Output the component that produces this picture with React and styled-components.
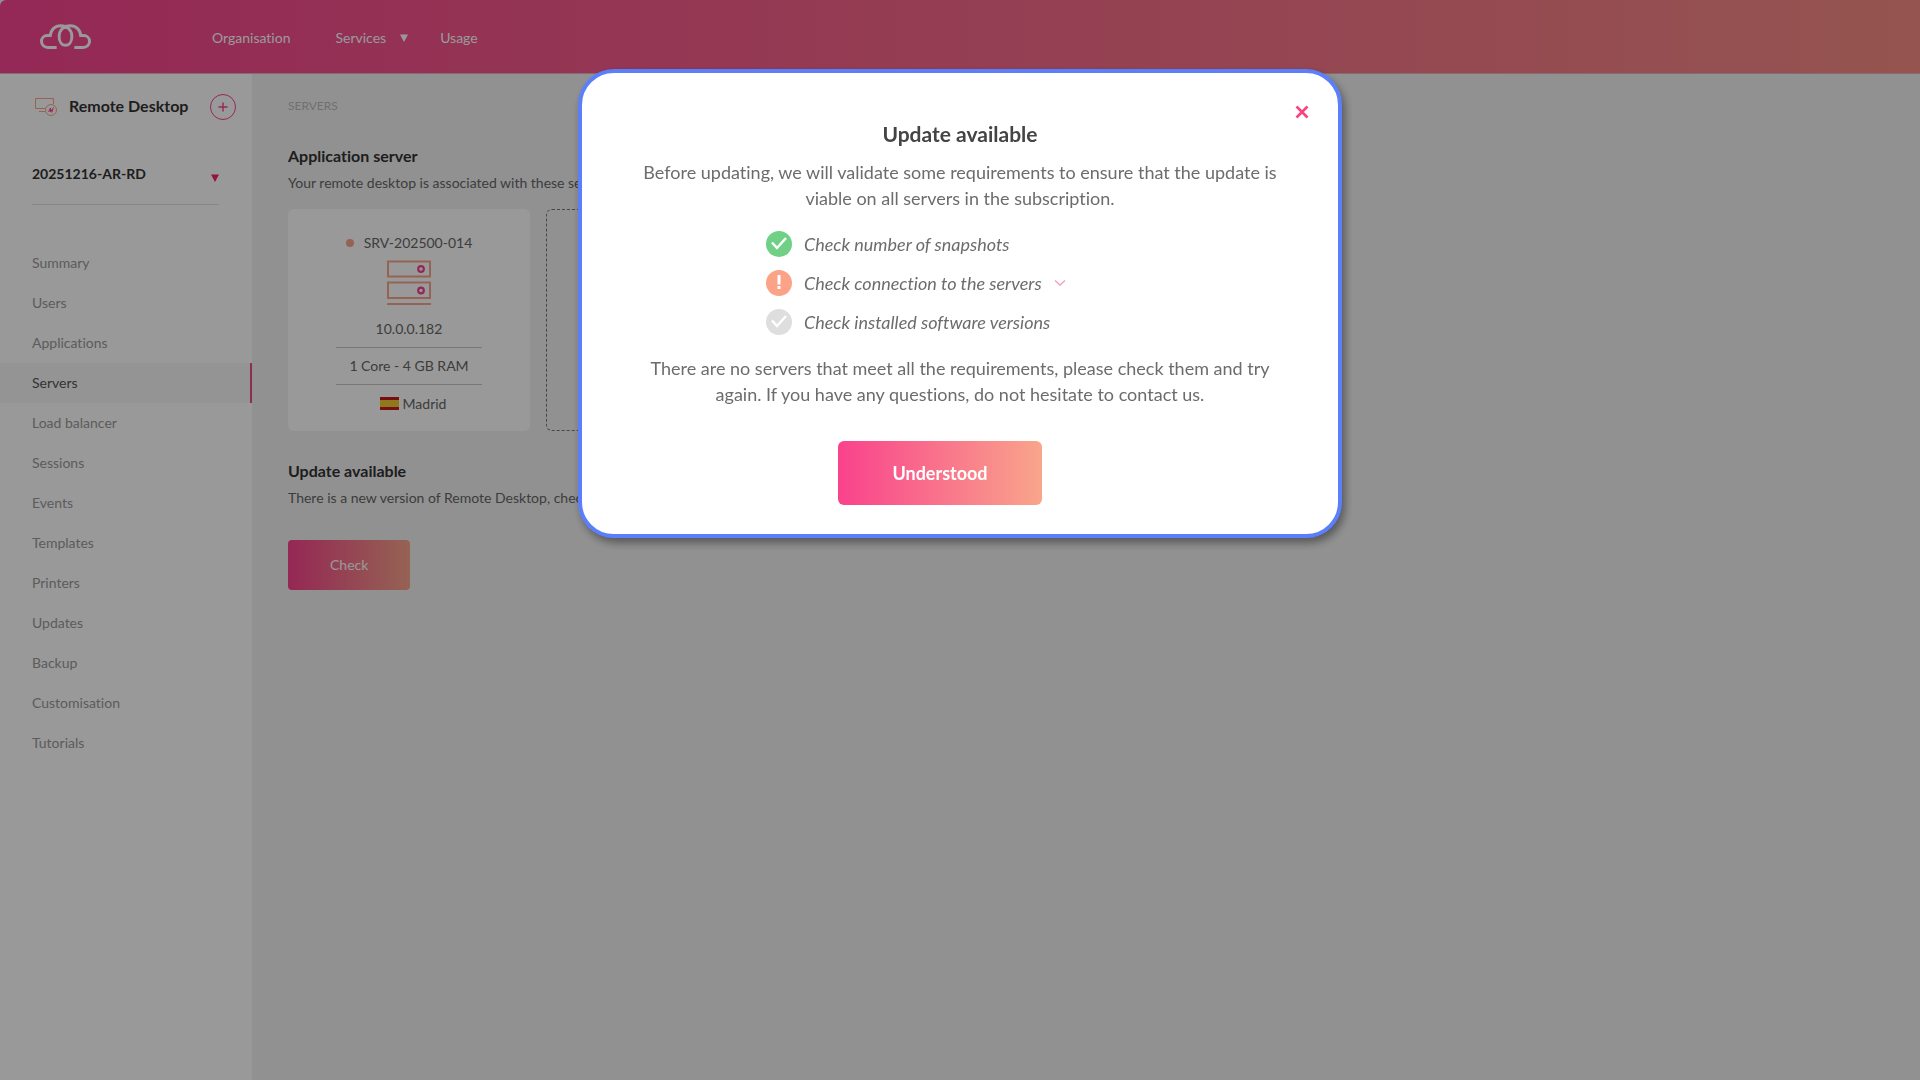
import React, { useState } from 'react'
import styled, { createGlobalStyle } from 'styled-components'

const GlobalStyle = createGlobalStyle`
* {
  box-sizing: border-box;
}
body {
  margin: 0;
  background-color: #f2f2f2;
  font-family: Lato, 'Liberation Sans', sans-serif;
  font-size: 14px;
  line-height: 20px;
  font-variant-ligatures: none;
  color: #666;
}
button, select {
  font-family: inherit;
}
`
const Page = styled.div`
min-height: 100vh;
display: flex;
flex-direction: column;
`
const TopBar = styled.header`
display: flex;
align-items: center;
height: 74px;
padding-left: 40px;
border-bottom: 1px solid #dcb4c0;
border-top-left-radius: 6px;
background-image: linear-gradient(90deg, #f7438f 0%, #f88d86 100%);
`
const LogoLink = styled.a`
display: flex;
width: 172px;
`
const TopNav = styled.nav`
display: flex;
align-items: center;
gap: 32px;
padding-top: 2px;
`
const TopLink = styled.a`
display: flex;
align-items: center;
gap: 14px;
padding-left: ${p => p.$menu ? '13px' : '0'};
color: #fff;
text-decoration: none;
`
const Body = styled.div`
flex: 1;
display: flex;
`
const Sidebar = styled.aside`
width: 252px;
flex-shrink: 0;
background-color: #fff;
`
const Product = styled.div`
display: flex;
align-items: center;
height: 65px;
padding: 0 16px 0 35px;
`
const ProductName = styled.h1`
margin: 0 auto 0 12px;
padding-bottom: 2px;
font-size: 16px;
line-height: 20px;
font-weight: 700;
color: #333;
`
const AddButton = styled.button`
display: flex;
align-items: center;
justify-content: center;
width: 26px;
height: 26px;
padding: 0;
border: 1px solid #f7438f;
border-radius: 50%;
background: none;
`
const Subscription = styled.label`
display: flex;
align-items: center;
height: 66px;
margin: 0 33px 38px 32px;
padding-top: 4px;
border-bottom: 1px solid #e2e2e2;
`
const SubscriptionSelect = styled.select`
flex: 1;
appearance: none;
padding: 0;
border: 0;
background: none;
font-size: 14px;
line-height: 20px;
font-weight: 700;
color: #333;
`
const SelectArrow = styled.span`
display: flex;
padding-top: 8px;
`
const MenuItem = styled.a`
display: flex;
align-items: center;
height: 40px;
padding-left: 32px;
border-right: ${p => p.$active ? '2px solid #e5508a' : '0'};
background-color: ${p => p.$active ? '#f7f7f7' : 'transparent'};
color: ${p => p.$active ? '#555' : '#999'};
text-decoration: none;
`
const Content = styled.main`
flex: 1;
padding: 22px 36px;
`
const Crumb = styled.div`
margin-bottom: 30px;
font-size: 12px;
line-height: 20px;
color: #bbb;
`
const Title = styled.h2`
margin: 0 0 7px;
font-size: 16px;
line-height: 20px;
font-weight: 700;
color: #333;
`
const Text = styled.p`
margin: 0;
line-height: 20px;
`
const Cards = styled.div`
display: flex;
gap: 16px;
margin: 16px 0 30px;
`
const Card = styled.article`
width: 242px;
height: 222px;
padding: 24px 48px 0;
border-radius: 6px;
background-color: #fff;
display: flex;
flex-direction: column;
align-items: center;
`
const EmptyCard = styled(Card)`
border: 1px dashed #777;
background: none;
`
const ServerName = styled.div`
display: flex;
align-items: center;
gap: 10px;
margin-bottom: 7px;
`
const Dot = styled.span`
width: 8px;
height: 8px;
border-radius: 50%;
background-color: #f9a58b;
`
const Details = styled.div`
width: 100%;
margin-top: 5px;
`
const Detail = styled.div`
display: flex;
align-items: center;
justify-content: center;
gap: 4px;
height: 37px;
padding-left: ${p => p.$last ? '8px' : '0'};
border-bottom: ${p => p.$last ? '0' : '1px solid #c8c8c8'};
`
const PrimaryButton = styled.button`
padding: ${p => p.$big ? '20px 54px' : '15px 42px'};
border: 0;
border-radius: ${p => p.$big ? '6px' : '4px'};
background-image: linear-gradient(90deg, #f9428c 0%, #f9a58b 100%);
color: #fff;
font-size: ${p => p.$big ? '18px' : '14px'};
font-weight: ${p => p.$big ? '700' : '400'};
line-height: ${p => p.$big ? '24px' : '20px'};
`
const CheckNow = styled.div`
margin-top: 32px;
`
const Overlay = styled.div`
position: fixed;
inset: 0;
display: flex;
align-items: flex-start;
justify-content: center;
padding-top: 69px;
background-color: rgba(0, 0, 0, 0.4);
`
const Dialog = styled.section`
position: relative;
width: 764px;
max-width: 100%;
padding: 48px 56px 29px;
border: 4px solid #5b7ffb;
border-radius: 36px;
background-color: #fff;
box-shadow: 3px 5px 8px rgba(0, 0, 0, 0.4);
text-align: center;
`
const CloseButton = styled.button`
position: absolute;
top: 28px;
right: 25px;
display: flex;
padding: 4px;
border: 0;
background: none;
`
const DialogTitle = styled.h2`
margin: 0 0 12px;
font-size: 21px;
line-height: 26px;
font-weight: 700;
color: #444;
`
const DialogText = styled.p`
margin: 0;
font-size: 18px;
line-height: 26px;
color: #6c6c6c;
`
const Checks = styled.ul`
display: flex;
flex-direction: column;
gap: 13px;
margin: 20px 0;
padding: 0 0 0 128px;
list-style: none;
`
const CheckItem = styled.li`
display: flex;
align-items: center;
gap: 12px;
font-size: 18px;
line-height: 26px;
font-style: italic;
color: #6c6c6c;
`
const ExpandButton = styled.button`
display: flex;
padding: 0;
border: 0;
background: none;
`
const DialogFooter = styled.div`
display: flex;
justify-content: center;
margin-top: 34px;
padding-right: 40px;
`

const menu = ['Summary', 'Users', 'Applications', 'Servers', 'Load balancer', 'Sessions', 'Events', 'Templates', 'Printers', 'Updates', 'Backup', 'Customisation', 'Tutorials']

const Triangle = ({ color }) => (
  <svg width="8" height="8" viewBox="0 0 8 8" aria-hidden="true">
    <path d="M0 0.500h8L4 8z" fill={color} />
  </svg>
)

const Logo = () => (
  <svg width="51" height="26" viewBox="0 0 52 26" fill="none" stroke="#fff" strokeWidth="3" aria-hidden="true">
    <path d="M17 23.700H8C4.500 23.700 1.500 21 1.500 17.500C1.500 14 4 11.500 7.500 11.500C9 11.500 10 11.500 10.500 11.500C11 5.500 15.500 1.500 21 1.500C28 1.500 32.500 6 32.500 12.500C32.500 17.500 30 21.500 26 21.500C22 21.500 19.500 17.500 19.500 12.500C19.500 6 24 1.500 31 1.500C36.500 1.500 41 5.500 41.500 11.500H44.500C48 11.500 50.500 14 50.500 17.500C50.500 21 47.500 23.700 44 23.700H35" />
  </svg>
)

const DesktopIcon = () => (
  <svg width="22" height="18" viewBox="0 0 22 18" fill="none" stroke="#f9a58b" aria-hidden="true">
    <path d="M10 10.500H0.500V0.500H18.500V6M4 13.500H10" />
    <circle cx="16" cy="12" r="5.500" />
    <path d="M13.500 14L15.500 10V14L18.500 9.500M16.500 14.500L18 11.500" stroke="#f7438f" />
  </svg>
)

const ServerIcon = () => (
  <svg width="46" height="46" viewBox="0 0 46 46" fill="none" stroke="#f9a58b" strokeWidth="2" aria-hidden="true">
    <path d="M2 1.500H44V16.500H2zM2 22.500H44V38H2zM1 44H45" />
    <g stroke="#f7438f" strokeWidth="2.200">
      <circle cx="35" cy="9" r="2.800" />
      <circle cx="35" cy="30.500" r="2.800" />
    </g>
  </svg>
)

const Flag = () => (
  <svg width="19" height="13" viewBox="0 0 19 13" aria-hidden="true">
    <path d="M0 0h19v13H0z" fill="#c91a1a" />
    <path d="M0 3h19v7H0z" fill="#f0c832" />
  </svg>
)

const StatusIcon = ({ status }) => {
  const fill = { ok: '#6fd086', error: '#fba287', pending: '#dedede' }[status]
  return (
    <svg width="26" height="26" viewBox="0 0 26 26" fill="none" stroke="#fff" strokeWidth="2.500" aria-hidden="true">
      <circle cx="13" cy="13" r="13" fill={fill} stroke="none" />
      {status === 'error'
        ? <path d="M13 5V14.500M13 16V19" strokeWidth="3" />
        : <path d="M6 11.500L11 17L20 7" />}
    </svg>
  )
}

export default function App() {
  const [open, setOpen] = useState(true)

  return (
    <Page>
      <GlobalStyle />
      <TopBar>
        <LogoLink href="#" aria-label="Home"><Logo /></LogoLink>
        <TopNav>
          <TopLink href="#">Organisation</TopLink>
          <TopLink href="#" $menu>Services <Triangle color="#fff" /></TopLink>
          <TopLink href="#">Usage</TopLink>
        </TopNav>
      </TopBar>
      <Body>
        <Sidebar>
          <Product>
            <DesktopIcon />
            <ProductName>Remote Desktop</ProductName>
            <AddButton aria-label="Add">
              <svg width="10" height="10" viewBox="0 0 10 10" stroke="#f7438f" strokeWidth="1.400" aria-hidden="true">
                <path d="M5 0.500V9.500M0.500 5H9.500" />
              </svg>
            </AddButton>
          </Product>
          <Subscription>
            <SubscriptionSelect aria-label="Subscription">
              <option>20251216-AR-RD</option>
            </SubscriptionSelect>
            <SelectArrow><Triangle color="#f7235f" /></SelectArrow>
          </Subscription>
          <nav>
            {menu.map(item => (
              <MenuItem href="#" key={item} $active={item === 'Servers'}>{item}</MenuItem>
            ))}
          </nav>
        </Sidebar>
        <Content>
          <Crumb>SERVERS</Crumb>
          <Title>Application server</Title>
          <Text>Your remote desktop is associated with these servers</Text>
          <Cards>
            <Card>
              <ServerName><Dot />SRV-202500-014</ServerName>
              <ServerIcon />
              <Details>
                <Detail>10.0.0.182</Detail>
                <Detail>1 Core - 4 GB RAM</Detail>
                <Detail $last><Flag />Madrid</Detail>
              </Details>
            </Card>
            <EmptyCard />
          </Cards>
          <Title>Update available</Title>
          <Text>There is a new version of Remote Desktop, check</Text>
          <CheckNow>
            <PrimaryButton onClick={() => setOpen(true)}>Check</PrimaryButton>
          </CheckNow>
        </Content>
      </Body>
      {open && (
        <Overlay>
          <Dialog role="dialog" aria-modal="true" aria-labelledby="update-title">
            <CloseButton aria-label="Close" onClick={() => setOpen(false)}>
              <svg width="14" height="14" viewBox="0 0 14 14" stroke="#f9437f" strokeWidth="2.600" aria-hidden="true">
                <path d="M1.500 1.500L12.500 12.500M12.500 1.500L1.500 12.500" />
              </svg>
            </CloseButton>
            <DialogTitle id="update-title">Update available</DialogTitle>
            <DialogText>Before updating, we will validate some requirements to ensure that the update is viable on all servers in the subscription.</DialogText>
            <Checks>
              <CheckItem><StatusIcon status="ok" />Check number of snapshots</CheckItem>
              <CheckItem>
                <StatusIcon status="error" />Check connection to the servers
                <ExpandButton aria-label="Show servers">
                  <svg width="12" height="8" viewBox="0 0 12 8" fill="none" stroke="#fba0bb" strokeWidth="1.500" aria-hidden="true">
                    <path d="M1 1.500L6 6L11 1.500" />
                  </svg>
                </ExpandButton>
              </CheckItem>
              <CheckItem><StatusIcon status="pending" />Check installed software versions</CheckItem>
            </Checks>
            <DialogText>There are no servers that meet all the requirements, please check them and try again. If you have any questions, do not hesitate to contact us.</DialogText>
            <DialogFooter>
              <PrimaryButton $big onClick={() => setOpen(false)}>Understood</PrimaryButton>
            </DialogFooter>
          </Dialog>
        </Overlay>
      )}
    </Page>
  )
}
